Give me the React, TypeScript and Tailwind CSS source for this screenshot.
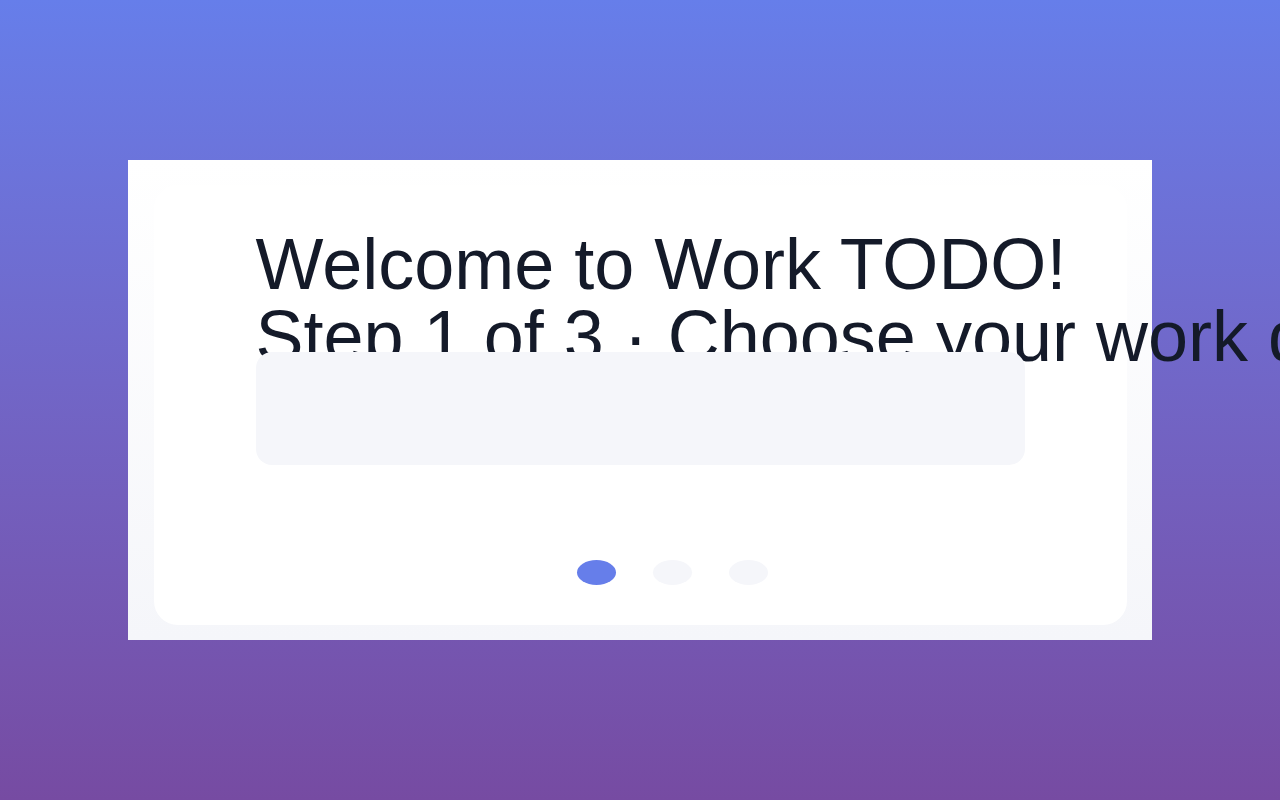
import React, { useState } from 'react';

const steps = ['domain', 'schedule', 'done'];

export default function App() {
  const [step, setStep] = useState(0);

  return (
    <div className="min-h-screen w-full bg-gradient-to-b from-[#667eea] to-[#764ba2] flex items-center justify-center font-['Liberation_Sans',Arial,sans-serif]">
      <div className="w-[1024px] h-[480px] bg-gradient-to-b from-white to-[#f5f6fa] pt-[25px]">
        {/* Onboarding card */}
        <div className="w-[973px] h-[440px] mx-auto bg-white rounded-3xl pt-[43px]">
          <div className="w-[769px] mx-auto">
            <div className="h-[124px] text-[#141a29] whitespace-nowrap">
              <h1 className="text-[72px] leading-none font-normal">Welcome to Work TODO!</h1>
              <p className="text-[72px] leading-none">Step 1 of 3 · Choose your work domain</p>
            </div>

            <div className="relative h-[113px] rounded-2xl bg-[#f5f6fa]" />

            <div className="mt-[95px] pl-[64px] flex justify-center gap-[37px]">
              {steps.map((s, i) => (
                <button
                  key={s}
                  onClick={() => setStep(i)}
                  className={
                    i === step
                      ? 'w-[39px] h-[25px] rounded-[50%] bg-[#667eea]'
                      : 'w-[39px] h-[25px] rounded-[50%] bg-[#f5f6fa]'
                  }
                />
              ))}
            </div>
          </div>
        </div>
      </div>
    </div>
  );
}
